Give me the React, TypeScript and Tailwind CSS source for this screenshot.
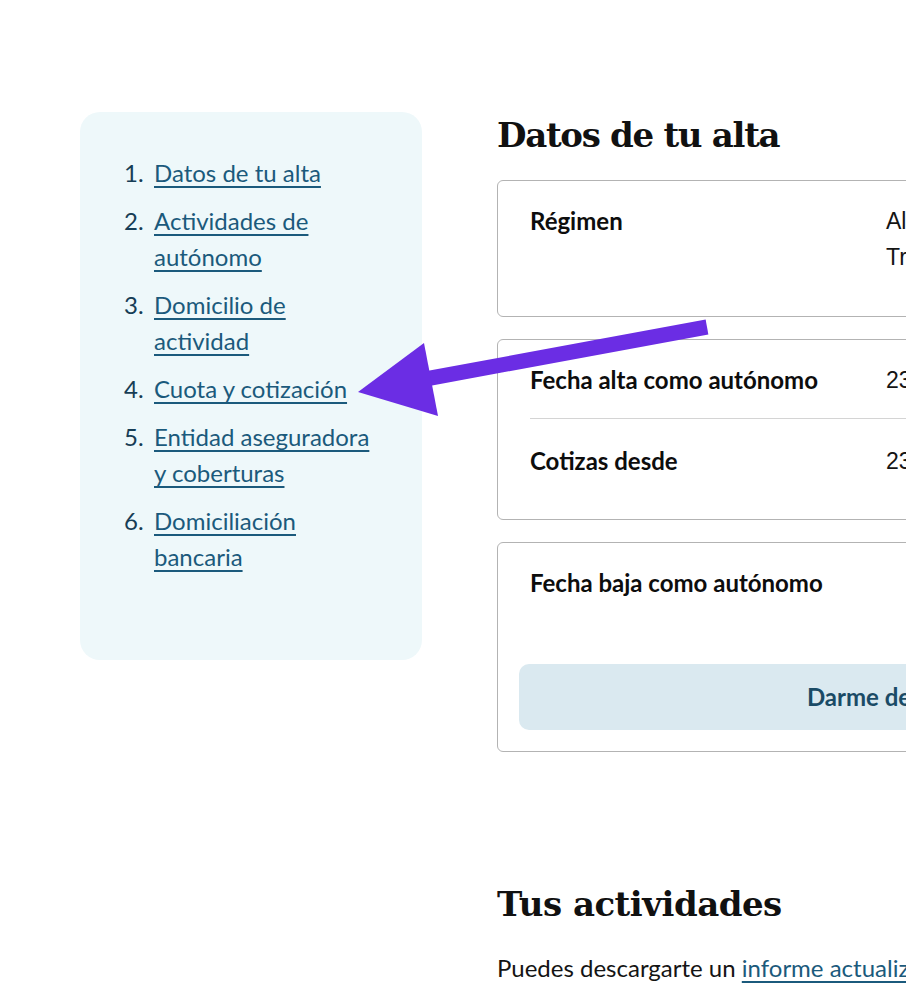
import React from "react";

const items: { n: string; lines: string[] }[] = [
  { n: "1.", lines: ["Datos de tu alta"] },
  { n: "2.", lines: ["Actividades de", "autónomo"] },
  { n: "3.", lines: ["Domicilio de", "actividad"] },
  { n: "4.", lines: ["Cuota y cotización"] },
  { n: "5.", lines: ["Entidad aseguradora", "y coberturas"] },
  { n: "6.", lines: ["Domiciliación", "bancaria"] },
];

function Row({
  label,
  value,
  divider,
}: {
  label: string;
  value: React.ReactNode;
  divider?: boolean;
}) {
  return (
    <div className="px-[11px]">
      <div
        className={
          "flex pt-[1px] pb-[20px] " + (divider ? "border-b border-[#d4d4d4] mb-[23px]" : "")
        }
      >
        <div className="w-[356px] shrink-0 font-bold text-[24px] leading-[36px] text-[#0d0d0d] font-['Lato',sans-serif]">
          {label}
        </div>
        <div className="flex-1 text-[23px] leading-[36px] text-[#141414] font-['Liberation_Sans',Arial,sans-serif]">
          {value}
        </div>
      </div>
    </div>
  );
}

export default function App() {
  return (
    <div className="relative w-[906px] h-[994px] overflow-hidden bg-white font-['Lato',sans-serif]">
      <div className="flex items-start pl-[80px] pt-[111px]">
        {/* Sidebar */}
        <nav className="mt-[1px] w-[342px] shrink-0 rounded-[20px] bg-[#eef8fa] pl-[44px] pr-[40px] pt-[43px] pb-[85px]">
          <ol className="flex flex-col gap-[12px]">
            {items.map((it) => (
              <li key={it.n} className="flex text-[24px] leading-[36px]">
                <span className="w-[30px] shrink-0 text-[#173d55]">{it.n}</span>
                <a
                  href="#"
                  className="text-[#1b5a7c] underline decoration-[2px] underline-offset-[4px]"
                >
                  {it.lines.map((l, i) => (
                    <span key={i} className="block">
                      {l}
                    </span>
                  ))}
                </a>
              </li>
            ))}
          </ol>
        </nav>

        {/* Main */}
        <main className="ml-[75px] w-[774px] shrink-0">
          <h2 className="font-['DejaVu_Serif',serif] font-bold text-[34px] leading-[48px] tracking-[-1.3px] text-[#111111] mb-[21px]">
            Datos de tu alta
          </h2>

          <div className="flex flex-col gap-[22px]">
            <section className="rounded-[6px] border border-[#b3b3b3] p-[21px]">
              <Row
                label="Régimen"
                value={
                  <>
                    Alta en el Régimen Especial de
                    <br />
                    Trabajadores Autónomos
                  </>
                }
              />
            </section>

            <section className="rounded-[6px] border border-[#b3b3b3] p-[21px] pb-[20px]">
              <Row label="Fecha alta como autónomo" value="23/01/2023" divider />
              <Row label="Cotizas desde" value="23/01/2023" />
            </section>

            <section className="rounded-[6px] border border-[#b3b3b3] p-[21px]">
              <Row label="Fecha baja como autónomo" value="" />
              <button className="mt-[43px] flex h-[66px] w-full items-center justify-center rounded-[10px] bg-[#dae9f0] text-[24px] font-bold text-[#1a4b66] font-['Lato',sans-serif]">
                Darme de baja
              </button>
            </section>
          </div>

          <h2 className="mt-[128px] font-['DejaVu_Serif',serif] font-bold text-[34px] leading-[48px] tracking-[-0.5px] text-[#111111]">
            Tus actividades
          </h2>
          <p className="mt-[22px] text-[24px] leading-[36px] text-[#141414] whitespace-nowrap">
            Puedes descargarte un{" "}
            <a href="#" className="text-[#1b5a7c] underline decoration-[2px] underline-offset-[4px]">
              informe actualizado de tus actividades
            </a>
          </p>
        </main>
      </div>

      {/* Annotation arrow */}
      <svg
        className="pointer-events-none absolute left-0 top-0"
        width="906"
        height="994"
        viewBox="0 0 906 994"
      >
        <line x1="707" y1="327" x2="420" y2="380" stroke="#6b2de4" strokeWidth="15" />
        <polygon points="358,392 424,343 438,416" fill="#6b2de4" />
      </svg>
    </div>
  );
}
